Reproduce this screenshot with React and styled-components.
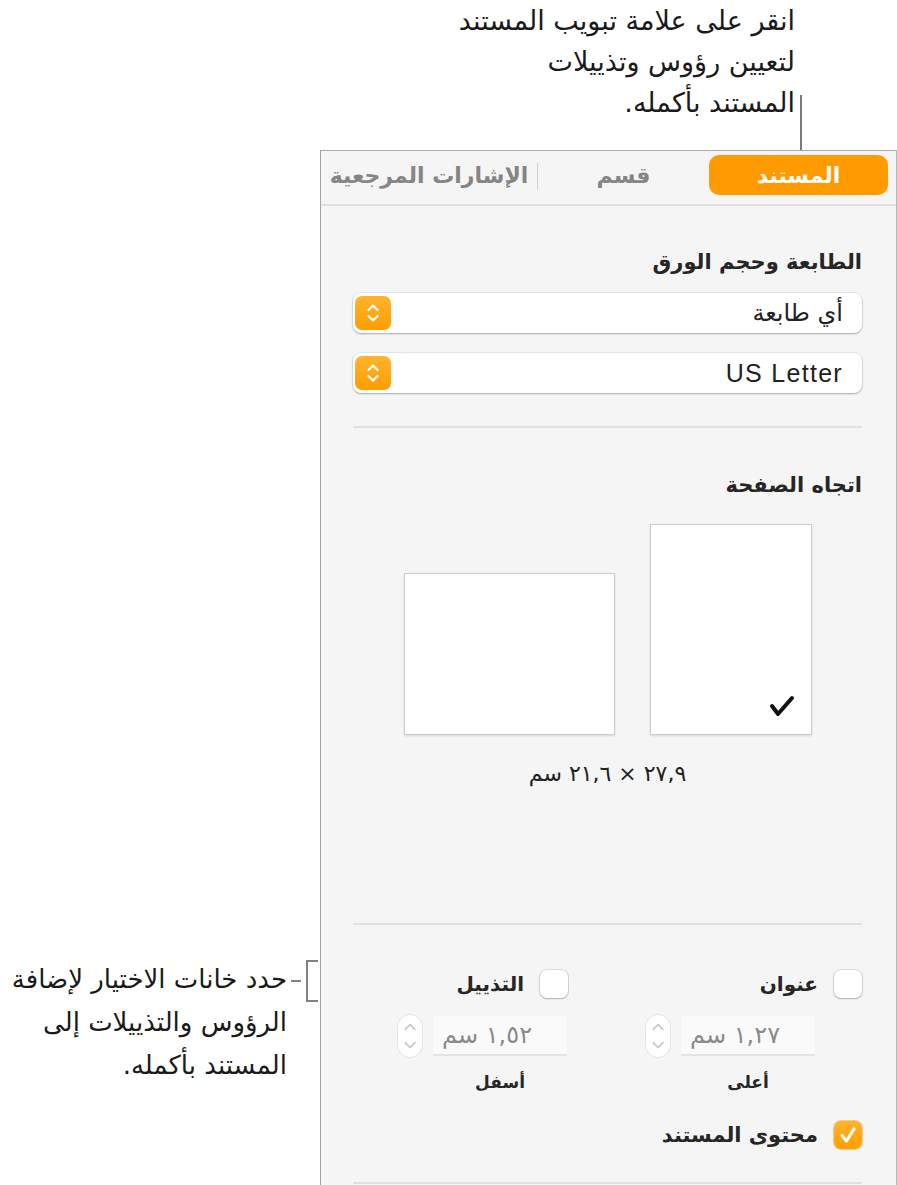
import React from "react";
import styled, { createGlobalStyle } from "styled-components";

const GlobalStyle = createGlobalStyle`
  html, body { margin: 0; padding: 0; background: #ffffff; }
  body { font-family: "DejaVu Sans", "Noto Sans", sans-serif; }
  * { box-sizing: border-box; }
`;

const ARABIC = `"DejaVu Sans", "Noto Sans", sans-serif`;
const CALLOUT = `"DejaVu Sans", "Noto Sans", sans-serif`;

const Page = styled.div`
  width: 897px;
  height: 1185px;
  overflow: hidden;
  background: #ffffff;
  display: flex;
  flex-direction: column;
`;

const TopCallout = styled.div`
  height: 150px;
  display: flex;
  justify-content: flex-end;
  padding-right: 95px;
`;

const CalloutText = styled.div`
  direction: rtl;
  text-align: right;
  font-family: ${CALLOUT};
  font-size: ${(p) => p.$fs || 27}px;
  line-height: ${(p) => p.$lh || 41}px;
  color: #1a1a1a;
  white-space: nowrap;
`;

const Leader = styled.div`
  align-self: flex-end;
  width: 2px;
  height: 55px;
  margin-left: 5px;
  background: #7a7a7a;
`;

const Body = styled.div`
  flex: 1;
  display: flex;
`;

const Gutter = styled.div`
  width: 320px;
  flex: none;
  padding-top: 808px;
  display: flex;
  justify-content: flex-end;
  align-items: flex-start;
`;

const SideCallout = styled.div`
  display: flex;
  align-items: flex-start;
`;

const Connector = styled.div`
  display: flex;
  align-items: center;
  height: 46px;
  margin-left: 4px;
  gap: 5px;
  margin-right: 2px;
`;

const Dash = styled.div`
  width: 10px;
  height: 2px;
  background: #808080;
`;

const Bracket = styled.div`
  width: 12px;
  height: 42px;
  border: 2px solid #808080;
  border-right: none;
`;

const Panel = styled.div`
  flex: 1;
  direction: rtl;
  background: #f5f5f5;
  border-top: 1px solid #a9a9a9;
  border-left: 1px solid #a3a3a3;
  border-right: 1px solid #b8b8b8;
  display: flex;
  flex-direction: column;
`;

const TabBar = styled.div`
  height: 55px;
  border-bottom: 2px solid #e0e0e0;
  display: grid;
  grid-template-columns: 179px 171px 1px 1fr;
  padding: 4px 8px 0 0;
  align-items: start;
`;

const Tab = styled.div`
  height: 40px;
  display: flex;
  align-items: center;
  justify-content: center;
  border-radius: 10px;
  font-family: ${ARABIC};
  font-weight: bold;
  font-size: 22px;
  white-space: nowrap;
  color: ${(p) => (p.$active ? "#ffffff" : "#858585")};
  background: ${(p) => (p.$active ? "#ff9a00" : "transparent")};
`;

const TabDivider = styled.div`
  width: 1px;
  height: 27px;
  margin-top: 8px;
  background: #d3d3d3;
`;

const Content = styled.div`
  padding: 0 34px 0 32px;
  display: flex;
  flex-direction: column;
`;

const Heading = styled.div`
  font-family: ${ARABIC};
  font-weight: bold;
  font-size: 21px;
  line-height: 24px;
  color: #262626;
  margin-top: ${(p) => p.$mt}px;
`;

const Popup = styled.div`
  height: 40px;
  margin-top: ${(p) => p.$mt}px;
  background: #ffffff;
  border-radius: 8px;
  box-shadow: 0 0 0 1px rgba(0, 0, 0, 0.05), 0 1px 2px rgba(0, 0, 0, 0.28);
  display: flex;
  align-items: center;
  padding: 0 19px 0 2px;
`;

const PopupLabel = styled.div`
  flex: 1;
  text-align: right;
  font-family: ${(p) => (p.$latin ? `"Liberation Sans", "DejaVu Sans", sans-serif` : ARABIC)};
  font-size: ${(p) => (p.$latin ? 25 : 24)}px;
  letter-spacing: ${(p) => (p.$latin ? 1.3 : 0)}px;
  color: #222222;
  white-space: nowrap;
`;

const SpinIcon = styled.div`
  width: 36px;
  height: 34px;
  border-radius: 7px;
  background: linear-gradient(#ffb42f, #ff9d00);
  display: flex;
  align-items: center;
  justify-content: center;
`;

const Separator = styled.div`
  height: 2px;
  background: #e1e1e1;
  margin-top: ${(p) => p.$mt}px;
`;

const Orientation = styled.div`
  margin-top: 27px;
  display: flex;
  justify-content: center;
  align-items: flex-end;
  gap: 35px;
`;

const Sheet = styled.div`
  width: ${(p) => (p.$portrait ? 162 : 211)}px;
  height: ${(p) => (p.$portrait ? 211 : 162)}px;
  background: #ffffff;
  border: 1px solid #cdcdcd;
  box-shadow: 0 1px 2px rgba(0, 0, 0, 0.12);
  display: flex;
  align-items: flex-end;
  padding: 0 16px 17px 0;
`;

const Dimensions = styled.div`
  margin-top: 27px;
  text-align: center;
  font-family: ${ARABIC};
  font-size: 22px;
  line-height: 24px;
  color: #222222;
`;

const CheckRow = styled.div`
  margin-top: 45px;
  display: grid;
  grid-template-columns: 294px 1fr;
`;

const CheckField = styled.label`
  display: flex;
  align-items: center;
  gap: 16px;
  font-family: ${ARABIC};
  font-weight: bold;
  font-size: ${(p) => p.$fs || 20}px;
  color: #262626;
  white-space: nowrap;
  margin-top: ${(p) => p.$mt || 0}px;
`;

const Box = styled.span`
  width: 28px;
  height: 28px;
  flex: none;
  border-radius: 7px;
  background: ${(p) => (p.$checked ? "linear-gradient(#ffb42f, #ff9d00)" : "#ffffff")};
  box-shadow: ${(p) =>
    p.$checked
      ? "0 0 0 1px rgba(230,140,0,0.4)"
      : "0 0 0 1px rgba(0,0,0,0.1), 0 1px 2px rgba(0,0,0,0.2)"};
  display: flex;
  align-items: center;
  justify-content: center;
`;

const StepRow = styled.div`
  margin-top: 16px;
  display: grid;
  grid-template-columns: 248px 1fr;
  padding-right: 47px;
`;

const StepCell = styled.div`
  display: grid;
  grid-template-columns: 134px 26px;
  column-gap: 10px;
  row-gap: 13px;
  align-items: center;
  justify-content: start;
`;

const Field = styled.div`
  height: 40px;
  background: #fafafa;
  border-bottom: 2px solid #e3e3e3;
  display: flex;
  align-items: center;
  justify-content: flex-end;
  padding-left: 9px;
  font-family: ${ARABIC};
  font-size: 24px;
  color: #8a8a8a;
  white-space: nowrap;
`;

const Arrows = styled.div`
  width: 26px;
  height: 44px;
  border-radius: 13px;
  background: #ffffff;
  border: 1px solid #e6e6e6;
  display: flex;
  flex-direction: column;
  align-items: center;
  justify-content: space-around;
  padding: 3px 0;
`;

const StepLabel = styled.div`
  text-align: center;
  font-family: ${ARABIC};
  font-weight: bold;
  font-size: 17px;
  line-height: 22px;
  color: #262626;
`;

const Chevrons = ({ color = "#fff", w = 16, h = 24 }) => (
  <svg width={w} height={h} viewBox="0 0 16 24" fill="none">
    <path d="M3.5 9 L8 4.5 L12.5 9" stroke={color} strokeWidth="2.2" strokeLinecap="round" strokeLinejoin="round" />
    <path d="M3.5 15 L8 19.5 L12.5 15" stroke={color} strokeWidth="2.2" strokeLinecap="round" strokeLinejoin="round" />
  </svg>
);

const Chevron = ({ up }) => (
  <svg width="14" height="10" viewBox="0 0 14 10" fill="none">
    <path
      d={up ? "M2 7.5 L7 2.5 L12 7.5" : "M2 2.5 L7 7.5 L12 2.5"}
      stroke="#c4c4c4"
      strokeWidth="1.6"
      strokeLinecap="round"
      strokeLinejoin="round"
    />
  </svg>
);

const PageCheck = () => (
  <svg width="26" height="22" viewBox="0 0 26 22" fill="none">
    <path d="M3 11 L9 19 L23 3" stroke="#111" strokeWidth="4" strokeLinecap="round" strokeLinejoin="round" />
  </svg>
);

const BoxCheck = () => (
  <svg width="18" height="18" viewBox="0 0 18 18" fill="none">
    <path d="M3 9.5 L7.5 15 L15 3" stroke="#fff" strokeWidth="3" strokeLinecap="round" strokeLinejoin="round" />
  </svg>
);

const Stepper = ({ value, label }) => (
  <StepCell>
    <Field>{value}</Field>
    <Arrows>
      <Chevron up />
      <Chevron />
    </Arrows>
    <StepLabel>{label}</StepLabel>
  </StepCell>
);

export default function App() {
  return (
    <Page>
      <GlobalStyle />
      <TopCallout>
        <CalloutText>
          انقر على علامة تبويب المستند
          <br />
          لتعيين رؤوس وتذييلات
          <br />
          المستند بأكمله.
        </CalloutText>
        <Leader />
      </TopCallout>
      <Body>
        <Gutter>
          <SideCallout>
            <CalloutText $lh={43} $fs={26}>
              حدد خانات الاختيار لإضافة
              <br />
              الرؤوس والتذييلات إلى
              <br />
              المستند بأكمله.
            </CalloutText>
            <Connector>
              <Dash />
              <Bracket />
            </Connector>
          </SideCallout>
        </Gutter>
        <Panel>
          <TabBar>
            <Tab $active>المستند</Tab>
            <Tab>قسم</Tab>
            <TabDivider />
            <Tab>الإشارات المرجعية</Tab>
          </TabBar>
          <Content>
            <Heading $mt={44}>الطابعة وحجم الورق</Heading>
            <Popup $mt={19}>
              <PopupLabel>أي طابعة</PopupLabel>
              <SpinIcon>
                <Chevrons />
              </SpinIcon>
            </Popup>
            <Popup $mt={20}>
              <PopupLabel $latin>US Letter</PopupLabel>
              <SpinIcon>
                <Chevrons />
              </SpinIcon>
            </Popup>
            <Separator $mt={33} />
            <Heading $mt={45}>اتجاه الصفحة</Heading>
            <Orientation>
              <Sheet $portrait>
                <PageCheck />
              </Sheet>
              <Sheet />
            </Orientation>
            <Dimensions>٢٧,٩ × ٢١,٦ سم</Dimensions>
            <Separator $mt={137} />
            <CheckRow>
              <CheckField>
                <Box />
                عنوان
              </CheckField>
              <CheckField>
                <Box />
                التذييل
              </CheckField>
            </CheckRow>
            <StepRow>
              <Stepper value="١,٢٧ سم" label="أعلى" />
              <Stepper value="١,٥٢ سم" label="أسفل" />
            </StepRow>
            <CheckField $mt={28} $fs={21}>
              <Box $checked>
                <BoxCheck />
              </Box>
              محتوى المستند
            </CheckField>
            <Separator $mt={33} />
          </Content>
        </Panel>
      </Body>
    </Page>
  );
}
